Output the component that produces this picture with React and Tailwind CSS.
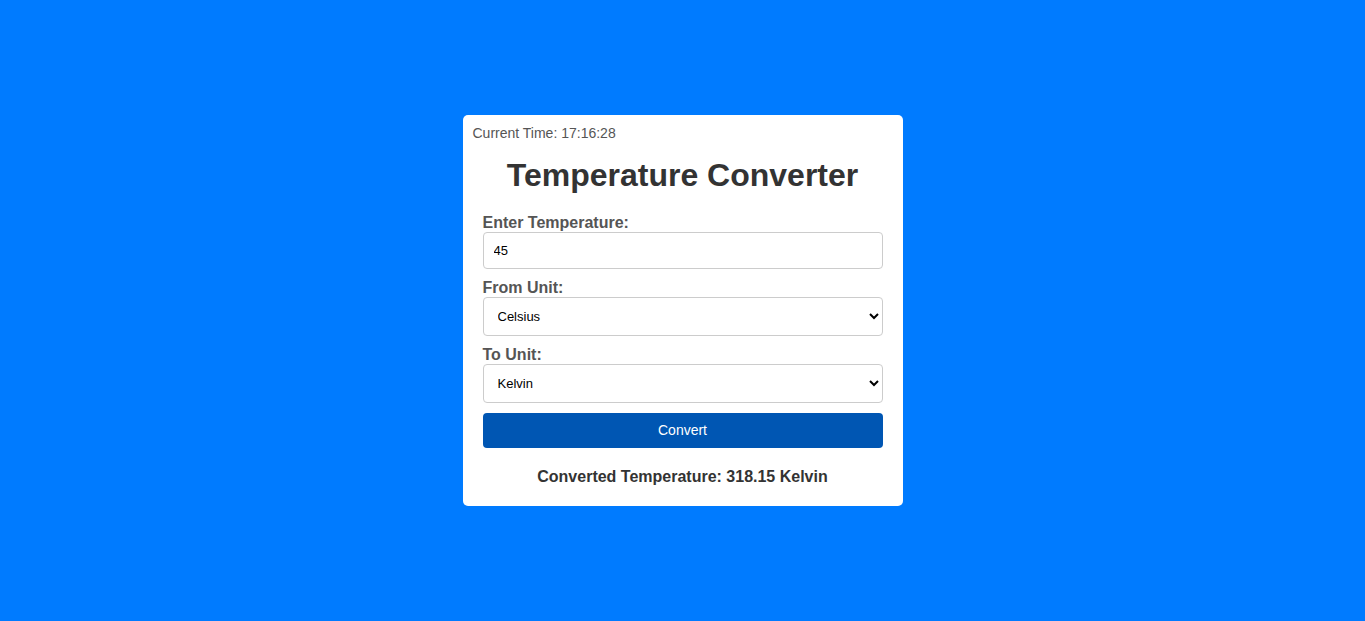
import { useState } from 'react';

const UNITS = ['Celsius', 'Fahrenheit', 'Kelvin'];

const toCelsius = (v, unit) =>
  unit === 'Fahrenheit' ? (v - 32) * 5 / 9 : unit === 'Kelvin' ? v - 273.15 : v;

const fromCelsius = (c, unit) =>
  unit === 'Fahrenheit' ? c * 9 / 5 + 32 : unit === 'Kelvin' ? c + 273.15 : c;

export default function App() {
  const [value, setValue] = useState('45');
  const [from, setFrom]   = useState('Celsius');
  const [to, setTo]       = useState('Kelvin');
  const [result, setResult] = useState('318.15 Kelvin');

  const convert = () => {
    const n = parseFloat(value);
    if (isNaN(n)) return;
    const out = fromCelsius(toCelsius(n, from), to);
    setResult(`${Math.round(out * 100) / 100} ${to}`);
  };

  return (
    <div className="h-screen w-full bg-[#007bff] flex items-center justify-center font-['Liberation_Sans',Arial,sans-serif]">
      <div className="w-[440px] bg-white rounded-[5px] px-[10px] pt-[10px] pb-[20px]">
        {/* clock */}
        <p className="text-[14px] leading-[16px] text-[#555]">Current Time: 17:16:28</p>

        <h1 className="mt-[16px] text-center text-[32px] leading-[37px] font-bold text-[#333]">
          Temperature Converter
        </h1>

        {/* form */}
        <div className="px-[10px] mt-[20px]">
          <label className="block text-[16px] leading-[18px] font-bold text-[#555]">Enter Temperature:</label>
          <input
            value={value}
            onChange={e => setValue(e.target.value)}
            className="block w-full h-[37px] px-[10px] text-[13px] text-black border border-[#ccc] rounded-[4px] bg-white outline-none"
          />

          <label className="mt-[10px] block text-[16px] leading-[18px] font-bold text-[#555]">From Unit:</label>
          <select
            value={from}
            onChange={e => setFrom(e.target.value)}
            className="block w-full h-[39px] px-[10px] text-[13px] text-black border border-[#ccc] rounded-[4px] bg-white"
          >
            {UNITS.map(u => <option key={u}>{u}</option>)}
          </select>

          <label className="mt-[10px] block text-[16px] leading-[18px] font-bold text-[#555]">To Unit:</label>
          <select
            value={to}
            onChange={e => setTo(e.target.value)}
            className="block w-full h-[39px] px-[10px] text-[13px] text-black border border-[#ccc] rounded-[4px] bg-white"
          >
            {UNITS.map(u => <option key={u}>{u}</option>)}
          </select>

          <button
            onClick={convert}
            className="mt-[10px] block w-full h-[35px] bg-[#0056b3] text-white text-[14px] rounded-[4px]"
          >
            Convert
          </button>

          <p className="mt-[20px] text-center text-[16px] leading-[18px] font-bold text-[#333]">
            Converted Temperature: {result}
          </p>
        </div>
      </div>
    </div>
  );
}
